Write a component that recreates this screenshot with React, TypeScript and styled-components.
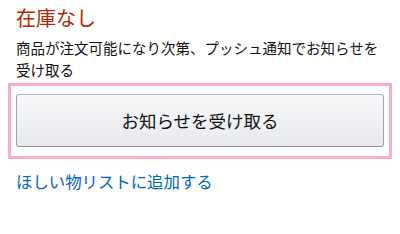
import React from "react";
import styled, { createGlobalStyle } from "styled-components";

const Global = createGlobalStyle`
  html, body { margin: 0; padding: 0; background: #fff; }
  body { font-family: "Noto Sans CJK JP", "Noto Sans", sans-serif; }
`;

const Page = styled.div`
  width: 400px;
  height: 234px;
  box-sizing: border-box;
  padding: 4px 16px 0;
  display: flex;
  flex-direction: column;
  background: #fff;
`;

const Status = styled.div`
  font-size: 20px;
  line-height: 28px;
  color: #b12704;
`;

const Note = styled.div`
  font-size: 14.5px;
  line-height: 22px;
  color: #111;
  margin-top: 5px;
`;

const Highlight = styled.div`
  margin: 2px -8px 0;
  border: 3px solid #f9abc8;
  padding: 8px 5px 9px;
  display: flex;
`;

const Button = styled.button`
  flex: 1;
  height: 53px;
  box-sizing: border-box;
  border: 1px solid #adb1b8;
  border-color: #adb1b8 #a2a6ac #8d9096;
  border-radius: 3px;
  background: linear-gradient(to bottom, #f7f8fa, #e7e9ec);
  box-shadow: 0 1px 0 rgba(255,255,255,.6) inset;
  font-family: "Noto Sans CJK JP", "Noto Sans", sans-serif;
  font-size: 17.5px;
  color: #111;
  padding: 0;
  cursor: pointer;
`;

const Link = styled.a`
  margin-top: 10px;
  font-size: 16.4px;
  line-height: 24px;
  color: #0066c0;
  text-decoration: none;
`;

export default function App() {
  return (
    <>
      <Global />
      <Page>
        <Status>在庫なし</Status>
        <Note>商品が注文可能になり次第、プッシュ通知でお知らせを受け取る</Note>
        <Highlight>
          <Button>お知らせを受け取る</Button>
        </Highlight>
        <Link href="#">ほしい物リストに追加する</Link>
      </Page>
    </>
  );
}
